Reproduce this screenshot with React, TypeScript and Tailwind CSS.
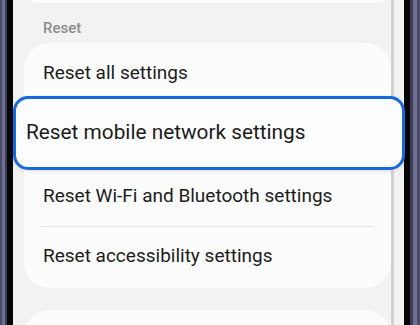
import React from 'react';

const font = { fontFamily: 'Roboto, "Noto Sans", sans-serif' };

function Row({ label, className = '' }: { label: string; className?: string }) {
  return (
    <div className={`shrink-0 flex items-center pl-[19px] text-[19px] text-[#1b1b1b] ${className}`}>
      {label}
    </div>
  );
}

export default function App() {
  return (
    <div className="w-[420px] h-[325px] flex overflow-hidden bg-[#f2f2f2]" style={font}>
      {/* left bezel */}
      <div className="w-[7px] flex shrink-0">
        <div className="w-[2px] bg-[#4a4a68]" />
        <div className="w-[3px] bg-[#6e6e90]" />
        <div className="w-[2px] bg-[#3c3c56]" />
      </div>
      <div className="w-[6px] shrink-0 bg-[#060606]" />

      {/* screen */}
      <div className="flex-1 flex bg-[#f2f2f2]">
        <div className="flex-1 flex flex-col pl-[11px]">
          <div className="shrink-0 -mt-[25px] h-[28px] rounded-[26px] bg-[#fcfcfd]" />
          <div className="shrink-0 h-[40px] flex items-center pl-[19px] pt-[10px] text-[15px] font-medium text-[#8c8c8c]">
            Reset
          </div>
          <div className="shrink-0 rounded-[26px] bg-[#fcfcfd] flex flex-col">
            <Row label="Reset all settings" className="h-[53px] pt-[7px]" />
            <div className="shrink-0 relative z-10 -ml-[11px] -mr-[14px] h-[74px] rounded-[15px] border-[3.5px] border-[#1767dd] bg-[#fdfdff] shadow-[0_1px_4px_rgba(0,0,0,0.12)] flex items-center pl-[10px] text-[20.8px] text-[#1b1b1b]">
              Reset mobile network settings
            </div>
            <Row label="Reset Wi-Fi and Bluetooth settings" className="h-[56px] pb-[4px]" />
            <div className="shrink-0 h-px mx-[17px] bg-[#e3e3e3]" />
            <Row label="Reset accessibility settings" className="h-[61px] pb-[2px]" />
          </div>
          <div className="shrink-0 mt-[22px] h-[40px] rounded-t-[26px] bg-[#fcfcfd]" />
        </div>
        <div className="w-[3px] bg-[#d2d2d2]" />
        <div className="w-[10px]" />
      </div>

      {/* right bezel */}
      <div className="w-[6px] shrink-0 bg-[#060606]" />
      <div className="w-[10px] flex shrink-0">
        <div className="w-[3px] bg-[#3c3c56]" />
        <div className="w-[4px] bg-[#6e6e90]" />
        <div className="w-[3px] bg-[#4a4a68]" />
      </div>
    </div>
  );
}
